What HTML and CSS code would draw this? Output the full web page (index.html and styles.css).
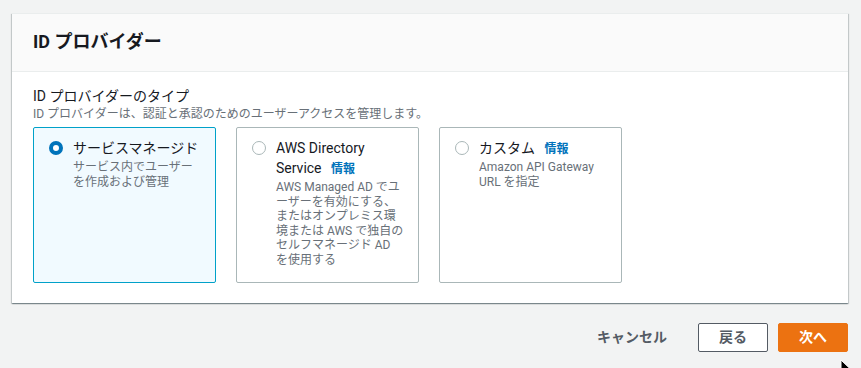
FILE: index.html
```html
<!DOCTYPE html>
<html lang="ja">
<head>
  <meta charset="UTF-8">
  <title>ID プロバイダー</title>
  <link rel="stylesheet" href="styles.css">
</head>
<body>
  <div class="container">
    <div class="panel">
      <div class="panel-header">
        <h2>ID プロバイダー</h2>
      </div>
      <div class="panel-body">
        <div class="field-label">ID プロバイダーのタイプ</div>
        <div class="field-desc">ID プロバイダーは、認証と承認のためのユーザーアクセスを管理します。</div>

        <div class="tiles">
          <label class="tile selected">
            <span class="radio checked"></span>
            <span class="tile-text">
              <span class="tile-title">サービスマネージド</span>
              <span class="tile-desc">サービス内でユーザー<br>を作成および管理</span>
            </span>
          </label>

          <label class="tile">
            <span class="radio"></span>
            <span class="tile-text">
              <span class="tile-title">AWS Directory Service <a class="info-link">情報</a></span>
              <span class="tile-desc">AWS Managed AD でユ<br>ーザーを有効にする、<br>またはオンプレミス環<br>境または AWS で独自の<br>セルフマネージド AD<br>を使用する</span>
            </span>
          </label>

          <label class="tile">
            <span class="radio"></span>
            <span class="tile-text">
              <span class="tile-title">カスタム <a class="info-link">情報</a></span>
              <span class="tile-desc">Amazon API Gateway<br>URL を指定</span>
            </span>
          </label>
        </div>
      </div>
    </div>

    <div class="actions">
      <button class="btn btn-link">キャンセル</button>
      <button class="btn btn-normal">戻る</button>
      <button class="btn btn-primary">次へ</button>
    </div>
  </div>

  <svg class="cursor" width="14" height="20" viewBox="0 0 14 20">
    <path d="M1 1 L1 16 L4.5 12.5 L7 18.5 L9.5 17.5 L7 11.5 L12 11.5 Z" fill="#000" stroke="#fff" stroke-width="1"/>
  </svg>
</body>
</html>
```

FILE: styles.css
```css
:root {
  --bg-page: #f2f3f3;
  --bg-panel: #ffffff;
  --bg-header: #fafafa;
  --text-primary: #16191f;
  --text-secondary: #687078;
  --text-button: #545b64;
  --border-light: #eaeded;
  --border-tile: #aab7b8;
  --selected-border: #00a1c9;
  --selected-bg: #f1faff;
  --link: #0073bb;
  --primary: #ec7211;
}

* {
  box-sizing: border-box;
  margin: 0;
  padding: 0;
}

body {
  font-family: Roboto, 'Noto Sans CJK JP', sans-serif;
  font-size: 14px;
  line-height: 20px;
  color: var(--text-primary);
  background: var(--bg-page);
  padding: 13px 13px 0 12px;
  overflow: hidden;
}

.panel {
  background: var(--bg-panel);
  border-top: 1px solid var(--border-light);
  box-shadow: 0 1px 1px 0 rgba(0, 28, 36, 0.3),
              1px 1px 1px 0 rgba(0, 28, 36, 0.15),
              -1px 1px 1px 0 rgba(0, 28, 36, 0.15);
}

.panel-header {
  background: var(--bg-header);
  border-bottom: 1px solid var(--border-light);
  padding: 17px 21px 18px;
}

.panel-header h2 {
  font-size: 18px;
  line-height: 22px;
  font-weight: 700;
}

.panel-body {
  padding: 14px 21px 20px;
}

.field-label {
  font-size: 14px;
  line-height: 20px;
}

.field-desc {
  font-size: 12px;
  line-height: 16px;
  color: var(--text-secondary);
}

.tiles {
  display: flex;
  gap: 20px;
  margin-top: 5px;
}

.tile {
  width: 183px;
  display: flex;
  gap: 10px;
  padding: 10px 14px 15px 15px;
  border: 1px solid var(--border-tile);
  border-radius: 2px;
  cursor: pointer;
}

.tile.selected {
  border-color: var(--selected-border);
  background: var(--selected-bg);
}

.radio {
  flex: none;
  width: 14px;
  height: 14px;
  margin-top: 3px;
  border: 1px solid var(--border-tile);
  border-radius: 50%;
  background: #fff;
}

.radio.checked {
  border: 4px solid var(--link);
}

.tile-text {
  display: flex;
  flex-direction: column;
  gap: 2px;
  min-width: 0;
}

.tile-title {
  font-size: 14px;
  line-height: 20px;
}

.tile-desc {
  font-size: 12px;
  line-height: 14.5px;
  color: var(--text-secondary);
  white-space: nowrap;
}

.info-link {
  display: inline-block;
  font-size: 12px;
  line-height: 16px;
  font-weight: 700;
  color: var(--link);
  margin-left: 6px;
}

.actions {
  display: flex;
  justify-content: flex-end;
  gap: 10px;
  margin-top: 20px;
}

button {
  font-family: inherit;
  font-size: 14px;
  line-height: 19px;
  font-weight: 700;
  padding: 4px 20px;
  border-radius: 2px;
  cursor: pointer;
}

.btn-link {
  background: transparent;
  border: 1px solid transparent;
  color: var(--text-button);
}

.btn-normal {
  background: #fff;
  border: 1px solid var(--text-button);
  color: var(--text-button);
}

.btn-primary {
  background: var(--primary);
  border: 1px solid var(--primary);
  color: #fff;
}

.cursor {
  position: fixed;
  left: 840px;
  top: 359px;
}
```
